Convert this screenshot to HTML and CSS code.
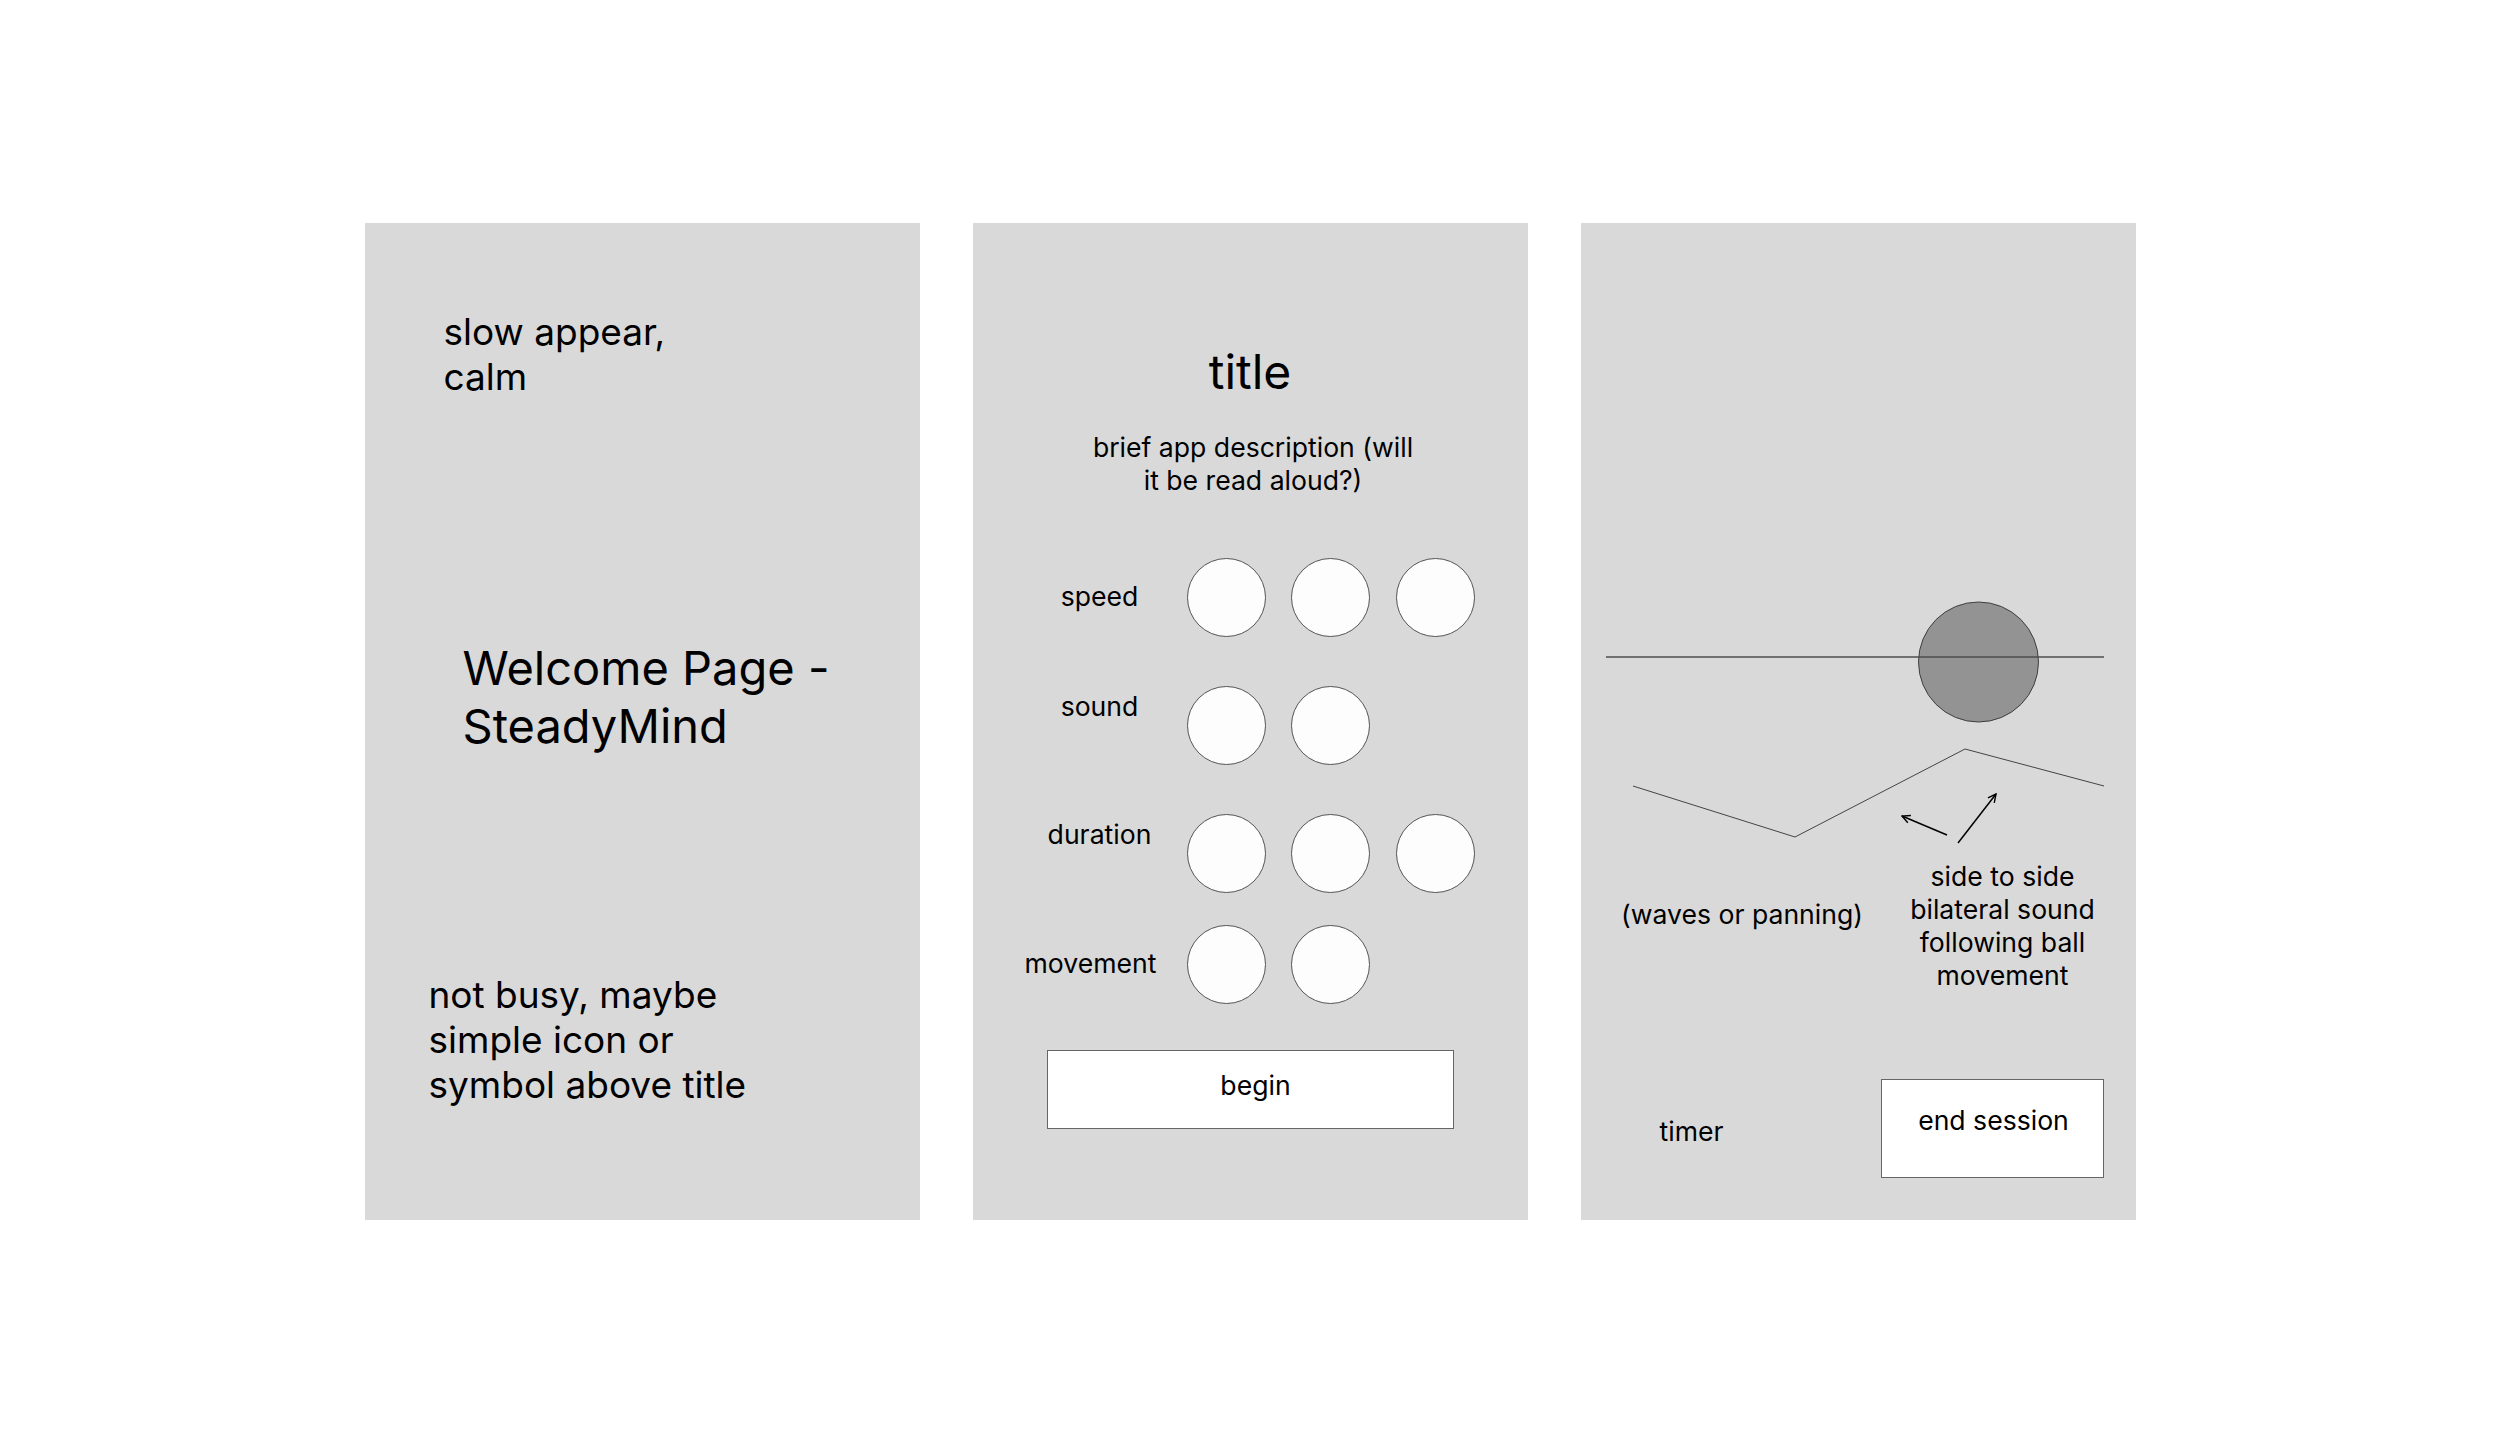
FILE: index.html
```html
<!DOCTYPE html>
<html lang="en">
<head>
    <meta charset="UTF-8">
    <meta name="viewport" content="width=device-width, initial-scale=1.0">
    <title>SteadyMind - Wireframes</title>
    <link rel="stylesheet" href="styles.css">
</head>
<body>
    <!-- screen 1: welcome -->
    <div class="screen welcome">
        <p class="note">slow appear,<br>calm</p>
        <h1 class="app-name">Welcome Page -<br>SteadyMind</h1>
        <p class="note note-bottom">not busy, maybe<br>simple icon or<br>symbol above title</p>
    </div>

    <!-- screen 2: session setup -->
    <div class="screen setup">
        <h2 class="title">title</h2>
        <p class="description">brief app description (will<br>it be read aloud?)</p>

        <div class="option-row">
            <span class="label">speed</span>
            <div class="choices">
                <span class="choice"></span>
                <span class="choice"></span>
                <span class="choice"></span>
            </div>
        </div>
        <div class="option-row">
            <span class="label high">sound</span>
            <div class="choices">
                <span class="choice"></span>
                <span class="choice"></span>
            </div>
        </div>
        <div class="option-row">
            <span class="label high">duration</span>
            <div class="choices">
                <span class="choice"></span>
                <span class="choice"></span>
                <span class="choice"></span>
            </div>
        </div>
        <div class="option-row compact">
            <span class="label wide">movement</span>
            <div class="choices">
                <span class="choice"></span>
                <span class="choice"></span>
            </div>
        </div>

        <button class="btn begin">begin</button>
    </div>

    <!-- screen 3: running session -->
    <div class="screen session">
        <svg class="track" width="555" height="260" viewBox="0 0 555 260">
            <defs>
                <marker id="arrowhead" viewBox="0 0 10 10" refX="9" refY="5" markerWidth="10" markerHeight="10" markerUnits="userSpaceOnUse" orient="auto">
                    <path d="M1 1 L9 5 L1 9" fill="none" stroke="#000" stroke-width="1.4"/>
                </marker>
            </defs>
            <circle cx="397.5" cy="69" r="60" fill="#939393" stroke="#3f3f3f" stroke-width="1"/>
            <line x1="25" y1="64" x2="523" y2="64" stroke="#4d4d4d" stroke-width="1.5"/>
            <polyline points="52,193 214,244 384,156 523,193" fill="none" stroke="#444" stroke-width="1"/>
            <line x1="366" y1="242" x2="321" y2="223" stroke="#000" stroke-width="1.5" marker-end="url(#arrowhead)"/>
            <line x1="377" y1="250" x2="415" y2="201" stroke="#000" stroke-width="1.5" marker-end="url(#arrowhead)"/>
        </svg>

        <div class="captions">
            <p class="waves">(waves or panning)</p>
            <p class="bilateral">side to side<br>bilateral sound<br>following ball<br>movement</p>
        </div>

        <div class="session-footer">
            <span class="timer">timer</span>
            <button class="btn end-session">end session</button>
        </div>
    </div>
</body>
</html>
```

FILE: styles.css
```css
body {
    margin: 0;
    height: 100vh;
    display: flex;
    justify-content: center;
    align-items: center;
    gap: 53px;
    background-color: #ffffff;
    font-family: 'Inter', 'Roboto', sans-serif;
    color: #000000;
}
p, h1, h2 {
    margin: 0;
    font-weight: 400;
}
.screen {
    width: 555px;
    height: 997px;
    background-color: #d9d9d9;
    box-sizing: border-box;
    display: flex;
    flex-direction: column;
    flex-shrink: 0;
}

/* welcome */
.welcome {
    padding-top: 86px;
}
.note {
    font-size: 37px;
    line-height: 45px;
    margin-left: 79px;
}
.app-name {
    font-size: 47px;
    line-height: 58px;
    margin: 240px 0 0 98px;
}
.note-bottom {
    margin-top: 217px;
    margin-left: 64px;
}

/* setup */
.setup {
    padding-top: 120px;
    font-size: 26.6px;
    line-height: 33px;
}
.title {
    font-size: 48px;
    line-height: 58px;
    text-align: center;
}
.description {
    margin-top: 30px;
    padding-left: 6px;
    text-align: center;
}
.option-row {
    display: flex;
    align-items: center;
    padding-left: 40px;
    margin-top: 49px;
}
.description + .option-row {
    margin-top: 61px;
}
.option-row.compact {
    margin-top: 32px;
}
.label {
    width: 174px;
    text-align: center;
    margin-bottom: 3px;
}
.label.high {
    align-self: flex-start;
    margin: 4px 0 0;
}
.label.wide {
    box-sizing: border-box;
    padding-right: 18px;
}
.choices {
    display: flex;
    gap: 25.5px;
}
.choice {
    width: 79px;
    height: 79px;
    box-sizing: border-box;
    border-radius: 50%;
    border: 1px solid #555555;
    background-color: #fdfdfd;
}
.btn {
    background-color: #ffffff;
    border: 1px solid #666666;
    border-radius: 0;
    box-sizing: border-box;
    font-family: inherit;
    font-size: 26.6px;
    line-height: 33px;
    color: #000000;
    cursor: pointer;
}
.begin {
    width: 407px;
    height: 79px;
    margin: 46px auto 0;
    padding: 0 0 8px 11px;
}

/* session */
.session {
    padding-top: 370px;
    font-size: 26.6px;
    line-height: 33px;
}
.track {
    display: block;
}
.captions {
    display: flex;
    margin-top: 7px;
}
.waves {
    width: 323px;
    margin-top: 38px;
    text-align: center;
}
.bilateral {
    width: 198px;
    text-align: center;
}
.session-footer {
    display: flex;
    align-items: flex-start;
    margin-top: 87px;
}
.timer {
    margin: 36px 0 0 79px;
}
.end-session {
    width: 223px;
    height: 99px;
    margin: 0 32px 0 auto;
    padding: 0 0 17px 3px;
}
```
